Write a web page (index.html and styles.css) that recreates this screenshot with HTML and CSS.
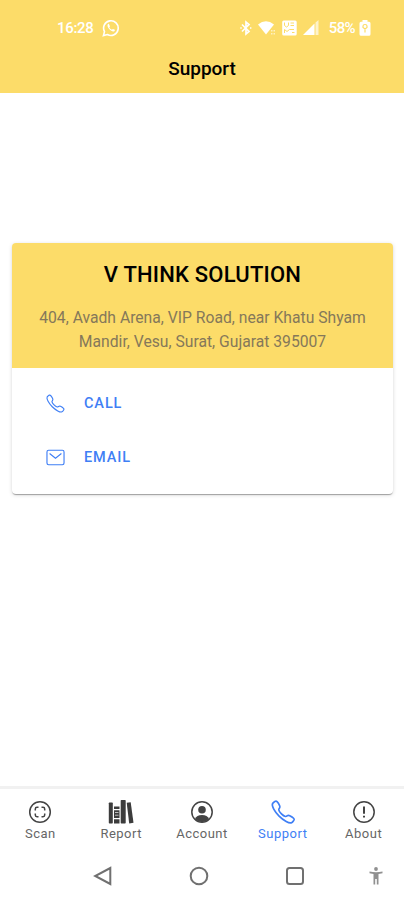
FILE: index.html
```html
<!DOCTYPE html>
<html lang="en">
<head>
    <meta charset="UTF-8">
    <meta name="viewport" content="width=device-width, initial-scale=1.0">
    <title>Support</title>
    <link rel="stylesheet" href="styles.css">
</head>
<body>

    <!-- Shared phone icon -->
    <svg class="sprite" width="0" height="0">
        <symbol id="icon-call" viewBox="0 0 512 512">
            <path d="M451 374c-15.88-16-54.34-39.35-73-48.76-24.3-12.24-26.3-13.24-45.4.95-12.74 9.47-21.21 17.93-36.12 14.75s-47.31-21.11-75.68-49.39-47.34-61.62-50.53-76.48 5.41-23.23 14.79-36c13.22-18 12.22-21 .92-45.3-8.81-18.9-32.84-57-48.9-72.8C119.9 44 119.9 47 108.83 51.6A160.15 160.15 0 0083 65.37C67 76 58.12 84.83 51.91 98.1s-9 44.38 23.07 102.64 54.57 88.05 101.14 134.49S258.5 406.64 310.85 436c64.76 36.27 89.6 29.2 102.91 23s22.18-15 32.83-31a159.09 159.09 0 0013.8-25.8C465 391.17 468 391.17 451 374z"/>
        </symbol>
    </svg>

    <header class="header">
        <div class="status-bar">
            <span class="time">16:28</span>
            <svg class="whatsapp" width="18" height="18" viewBox="0 0 18 18">
                <path d="M1.4 16.6l1.1-4A7.3 7.3 0 1 1 5.4 15.500z" fill="none" stroke="#fff" stroke-width="1.6"/>
                <path d="M6.300 4.800c-1.500 1-.9 3.300.9 5.300s4.200 3.300 5.400 1.800c.5-.7.3-1-.2-1.300l-1.500-.7-1 .9c-1.200-.5-2.200-1.500-2.600-2.500l.7-.9-.8-2c-.2-.5-.5-.7-.9-.6z" fill="#fff"/>
            </svg>
            <div class="status-icons">
                <svg width="12" height="16" viewBox="0 0 12 16" fill="none" stroke="#fff" stroke-width="1.700">
                    <path d="M2 4.500l7 7L6 14V2l3 2.500-7 7"/>
                    <path d="M.3 8h1.400M10 8h1.400"/>
                </svg>
                <svg width="18" height="16" viewBox="0 0 18 16" fill="#fff">
                    <path d="M0 4.500Q8 -2 16 4.500L8 14.500z"/>
                    <path d="M13 10h1.500v1.500H13zM15.500 10H17v1.500h-1.500zM13 13h1.500v1.500H13zM15.500 13H17v1.500h-1.500z" opacity=".6"/>
                </svg>
                <svg width="15" height="16" viewBox="0 0 15 16">
                    <rect x=".2" y=".5" width="14.500" height="15" rx="1.500" fill="#fff"/>
                    <path d="M2.500 2.500v3l2 1.500 2-1.500v-3M8.500 3h3.500M8.500 5.500H12M2.500 13V9.500l2.500 2 2.500-2h4.500M10 12.500h2.500" fill="none" stroke="#fcdc69" stroke-width="1"/>
                </svg>
                <svg width="16" height="16" viewBox="0 0 16 16" fill="#fff">
                    <path d="M0 15L11.500 3.500V15z"/>
                    <path d="M12.500 2.500L15.500 0V15h-3z" opacity=".65"/>
                </svg>
                <span class="battery-text">58%</span>
                <svg class="battery" width="12" height="16" viewBox="0 0 12 16">
                    <path d="M3.500 0h5v1.700H10q1.500 0 1.500 1.500v11q0 1.500-1.500 1.500H2q-1.500 0-1.500-1.500v-11q0-1.500 1.500-1.500h1.500z" fill="#fff"/>
                    <path d="M4 7.500V6q0-1.500 2-1.500t2 1.500v1.500L6 9zM6 9v3.500" fill="none" stroke="#fcdc69" stroke-width="1.200"/>
                </svg>
            </div>
        </div>
        <h1 class="page-title">Support</h1>
    </header>

    <main class="content">
        <div class="card">
            <div class="card-header">
                <h2>V THINK SOLUTION</h2>
                <p>404, Avadh Arena, VIP Road, near Khatu Shyam<br>Mandir, Vesu, Surat, Gujarat 395007</p>
            </div>
            <div class="card-actions">
                <a href="#">
                    <svg class="line-icon" width="21" height="21"><use href="#icon-call"/></svg>
                    CALL
                </a>
                <a href="#">
                    <svg class="line-icon" width="21" height="21" viewBox="0 0 512 512">
                        <rect x="48" y="80" width="416" height="352" rx="40"/>
                        <path d="M112 160l144 112 144-112"/>
                    </svg>
                    EMAIL
                </a>
            </div>
        </div>
    </main>

    <nav class="tab-bar">
        <a href="#">
            <svg class="line-icon" width="26" height="26" viewBox="0 0 26 26">
                <circle cx="13" cy="13" r="10.300"/>
                <path d="M8.300 11.500V10q0-1.700 1.700-1.700h1.500M14.500 8.300H16q1.700 0 1.700 1.700v1.500M17.700 14.500V16q0 1.700-1.700 1.700h-1.500M11.500 17.700H10q-1.700 0-1.700-1.700v-1.500"/>
            </svg>
            Scan
        </a>
        <a href="#">
            <svg width="26" height="26" viewBox="0 0 26 26" fill="#3c3c3c">
                <rect x=".8" y="3.500" width="4" height="21" rx=".7"/>
                <path d="M6 7.500h5.500V10H6zM6 11.200h5.500v7.800H6zM6 20.200h5.500v4.300H6z"/>
                <path d="M7 13.500h3.500M7 16.200h3.500" stroke="#ddd" stroke-width=".8"/>
                <rect x="12.700" y="1" width="5" height="23.500" rx=".7"/>
                <path d="M18.700 3.800l4-.5 2.800 20.500-4.300.7z"/>
            </svg>
            Report
        </a>
        <a href="#">
            <svg width="26" height="26" viewBox="0 0 26 26">
                <circle cx="13" cy="13" r="10.200" fill="none" stroke="#444" stroke-width="1.500"/>
                <circle cx="13" cy="10.800" r="3.800" fill="#444"/>
                <path d="M6 20q1.500-4 7-4t7 4q-3 3.200-7 3.200T6 20z" fill="#444"/>
            </svg>
            Account
        </a>
        <a href="#" class="active">
            <svg class="line-icon" width="28" height="26" viewBox="0 0 28 26"><use href="#icon-call" width="27" height="27" x=".8" y="-.5"/></svg>
            Support
        </a>
        <a href="#">
            <svg class="line-icon" width="26" height="26" viewBox="0 0 26 26">
                <circle cx="13" cy="13" r="10.200"/>
                <path d="M13 7.500v7.200" stroke-width="2"/>
                <path d="M13 16.800v1.800" stroke-width="2"/>
            </svg>
            About
        </a>
    </nav>

    <div class="system-nav">
        <div class="nav-keys">
            <svg width="20" height="20" viewBox="0 0 20 20"><path d="M17.300 2v16L2.200 10z"/></svg>
            <svg width="20" height="20" viewBox="0 0 20 20"><circle cx="10" cy="10" r="8.300"/></svg>
            <svg width="20" height="20" viewBox="0 0 20 20"><rect x="2" y="2" width="16" height="16" rx="2.500"/></svg>
        </div>
        <svg class="accessibility" width="14" height="18" viewBox="0 0 14 18">
            <circle cx="7" cy="2" r="1.900"/>
            <path d="M.5 4.500q6.500 1.600 13 0v1.700l-4 .8v10.500H7.800V12H6.200v5.500H4.500V7l-4-.8z"/>
        </svg>
    </div>

</body>
</html>
```

FILE: styles.css
```css
* {
    box-sizing: border-box;
}

body {
    font-family: Roboto, sans-serif;
    margin: 0;
    background-color: #fff;
    display: flex;
    flex-direction: column;
    height: 100vh;
    overflow: hidden;
}

a {
    text-decoration: none;
}

svg {
    flex: none;
}

.sprite {
    position: absolute;
}

.line-icon {
    fill: none;
    stroke: currentColor;
}

/* Header */
.header {
    background-color: #fcdc69;
    height: 93px;
    flex: none;
    padding-top: 19px;
}

.status-bar {
    display: flex;
    align-items: center;
    height: 18px;
    padding: 0 33px 0 57px;
    color: #fff;
    font-size: 15px;
    font-weight: 500;
}

.time {
    width: 45px;
    letter-spacing: -0.3px;
}

.status-icons {
    display: flex;
    align-items: center;
    margin-left: auto;
    gap: 6px;
}

.battery-text {
    margin-left: 4px;
    margin-right: -2px;
    letter-spacing: -0.6px;
}

.page-title {
    margin: 20px 0 0;
    font-size: 19px;
    line-height: 23px;
    font-weight: 500;
    text-align: center;
}

/* Support card */
.content {
    flex: 1;
    padding: 150px 11px 0 12px;
}

.card {
    height: 251px;
    border-radius: 4px;
    overflow: hidden;
    box-shadow: 0 2px 1px -1px rgba(0, 0, 0, 0.2), 0 1px 1px rgba(0, 0, 0, 0.14), 0 1px 4px rgba(0, 0, 0, 0.14);
}

.card-header {
    background-color: #fcdc69;
    height: 125px;
    padding-top: 19px;
    text-align: center;
}

.card-header h2 {
    margin: 0 0 18px;
    font-size: 22px;
    line-height: 26px;
    font-weight: 500;
    letter-spacing: 0.2px;
}

.card-header p {
    margin: 0;
    font-size: 15.7px;
    line-height: 24px;
    color: #85785a;
}

.card-actions {
    padding: 8px 33px;
}

.card-actions a {
    display: flex;
    align-items: center;
    gap: 18px;
    height: 54px;
    color: #3f7ff5;
    font-size: 14.5px;
    font-weight: 500;
    letter-spacing: 0.9px;
}

.card-actions .line-icon {
    stroke-width: 28px;
}

/* Bottom tabs */
.tab-bar {
    display: grid;
    grid-template-columns: repeat(5, 1fr);
    height: 66px;
    flex: none;
    border-top: 3px solid #f1f1f1;
    padding-top: 10px;
}

.tab-bar a {
    display: flex;
    flex-direction: column;
    align-items: center;
    color: #666;
    font-size: 13px;
    line-height: 17px;
    letter-spacing: 0.5px;
}

.tab-bar .line-icon {
    color: #444;
    stroke-width: 1.5px;
}

.tab-bar .active,
.tab-bar .active .line-icon {
    color: #3f7ff5;
}

.tab-bar .active .line-icon {
    stroke-width: 32px;
}

/* Android navigation buttons */
.system-nav {
    display: flex;
    align-items: center;
    justify-content: space-between;
    height: 48px;
    flex: none;
    padding: 0 21px 0 93px;
}

.system-nav svg {
    fill: none;
    stroke: #707070;
    stroke-width: 2px;
}

.nav-keys {
    display: flex;
    gap: 76px;
}

.system-nav .accessibility {
    fill: #909090;
    stroke: none;
}
```
